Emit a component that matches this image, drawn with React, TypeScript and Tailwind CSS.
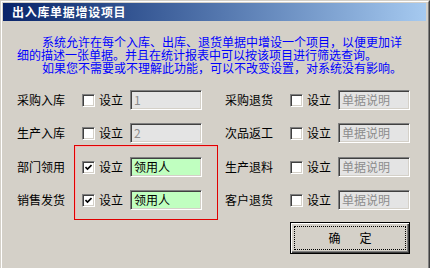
type Field = {
  label: string;
  checked: boolean;
  value: string;
  kind: "off" | "on" | "note";
};

const rows: [Field, Field][] = [
  [
    { label: "采购入库", checked: false, value: "1", kind: "off" },
    { label: "采购退货", checked: false, value: "单据说明", kind: "note" },
  ],
  [
    { label: "生产入库", checked: false, value: "2", kind: "off" },
    { label: "次品返工", checked: false, value: "单据说明", kind: "note" },
  ],
  [
    { label: "部门领用", checked: true, value: "领用人", kind: "on" },
    { label: "生产退料", checked: false, value: "单据说明", kind: "note" },
  ],
  [
    { label: "销售发货", checked: true, value: "领用人", kind: "on" },
    { label: "客户退货", checked: false, value: "单据说明", kind: "note" },
  ],
];

// classic sunken 3D edge
const sunken =
  "border border-t-[#808080] border-l-[#808080] border-b-white border-r-white shadow-[inset_1px_1px_0_#404040,inset_-1px_-1px_0_#d4d0c8]";

function CheckBox({ checked }: { checked: boolean }) {
  return (
    <div className={`w-[13px] h-[13px] bg-white flex items-center justify-center ${sunken}`}>
      {checked && (
        <svg width="7" height="7" viewBox="0 0 7 7">
          <path d="M0.5 3 L2.5 5 L6.5 1" fill="none" stroke="#000" strokeWidth="1.6" />
        </svg>
      )}
    </div>
  );
}

function FieldGroup({ f }: { f: Field }) {
  const box =
    f.kind === "on"
      ? "bg-[#c0ffc0] text-black"
      : "bg-[#e4e4e4] text-[#8c8c8c]";
  return (
    <div className="flex items-center h-[20px]">
      <span className="w-[48px]">{f.label}</span>
      <div className="ml-[17px]">
        <CheckBox checked={f.checked} />
      </div>
      <span className="ml-[4px] w-[24px]">设立</span>
      <div className={`ml-[7px] w-[72px] h-[20px] pl-[3px] flex items-center leading-none ${sunken} ${box}`}>
        {f.value}
      </div>
    </div>
  );
}

export default function App() {
  return (
    <div className="w-[430px] h-[268px] overflow-hidden bg-[#d4d0c8] text-[12px] text-black font-['Noto_Sans_CJK_SC',sans-serif]">
      <div className="h-full border-l border-t border-r border-[#d4d0c8] border-r-[#404040]">
        <div className="h-full border-l border-t border-white border-r border-r-[#808080] pt-px pl-px pr-[2px]">
          {/* title bar */}
          <div className="h-[18px] bg-gradient-to-r from-[#0a246a] to-[#a6caf0] pl-[9px] flex items-center text-white font-bold tracking-[0.7px]">
            出入库单据增设项目
          </div>

          <div className="pl-[14px]">
            {/* description */}
            <div className="mt-[14px] text-[#0000ff] leading-[13px]">
              <div className="pl-[25px]">系统允许在每个入库、出库、退货单据中增设一个项目，以便更加详</div>
              <div>细的描述一张单据。并且在统计报表中可以按该项目进行筛选查询。</div>
              <div className="pl-[25px]">如果您不需要或不理解此功能，可以不改变设置，对系统没有影响。</div>
            </div>

            {/* option rows */}
            <div className="relative mt-[16px] flex flex-col gap-[13px]">
              {rows.map(([l, r], i) => (
                <div key={i} className={`flex ${i === 2 ? "mt-px" : ""}`}>
                  <FieldGroup f={l} />
                  <div className="ml-[23px]">
                    <FieldGroup f={r} />
                  </div>
                </div>
              ))}
              {/* red highlight around edited rows */}
              <div className="absolute left-[57px] top-[55px] w-[144px] h-[75px] border border-[#e00000] shadow-[inset_1px_1px_0_#f4b4b4] pointer-events-none" />
            </div>

            {/* OK button */}
            <div className="mt-[12px] ml-[273px]">
              <button className="w-[120px] h-[32px] border border-black bg-[#d4d0c8] p-[3px] flex shadow-[inset_1px_1px_0_#fff,inset_-1px_-1px_0_#404040,inset_-2px_-2px_0_#808080]">
                <span className="flex-1 border border-dotted border-black flex items-center justify-center">
                  确<span className="ml-[19px]">定</span>
                </span>
              </button>
            </div>
          </div>
        </div>
      </div>
    </div>
  );
}
